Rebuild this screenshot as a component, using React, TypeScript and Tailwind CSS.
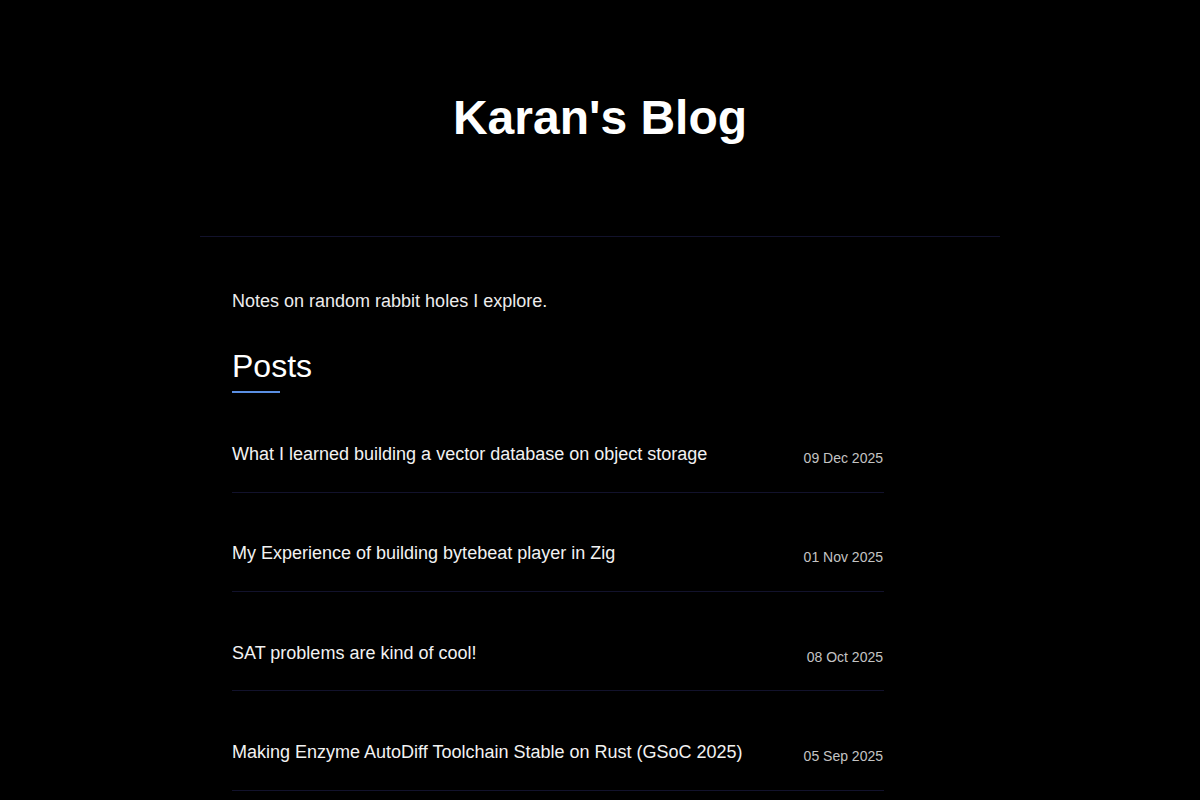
const posts = [
  { title: 'What I learned building a vector database on object storage', date: '09 Dec 2025' },
  { title: 'My Experience of building bytebeat player in Zig', date: '01 Nov 2025' },
  { title: 'SAT problems are kind of cool!', date: '08 Oct 2025' },
  { title: 'Making Enzyme AutoDiff Toolchain Stable on Rust (GSoC 2025)', date: '05 Sep 2025' },
];

export default function App() {
  return (
    <div className="min-h-screen bg-black text-white font-['Liberation_Sans',Arial,sans-serif]">
      <div className="mx-auto max-w-[800px]">
        {/* header */}
        <header className="border-b border-[#12122c] pt-[94px] pb-[94px] text-center">
          <h1 className="text-5xl leading-none font-bold text-white">Karan's Blog</h1>
        </header>

        <main className="px-8 pt-[51px] pb-12">
          <p className="text-lg leading-[27px] text-[#ececec]">Notes on random rabbit holes I explore.</p>

          <h2 className="mt-8 text-[32px] leading-[38.4px] font-normal text-white">Posts</h2>
          <div className="mt-[6px] h-[2px] w-12 bg-[#5b8fe3]" />

          <ul className="w-[652px]">
            {posts.map((post) => (
              <li
                key={post.title}
                className="flex items-end justify-between border-b border-[#12122c] pt-[47.5px] pb-[23.83px]"
              >
                <span className="text-lg leading-[27px] text-[#f2f2f2]">{post.title}</span>
                <span className="pr-px text-sm leading-5 text-[#c4c4c4]">{post.date}</span>
              </li>
            ))}
          </ul>
        </main>
      </div>
    </div>
  );
}
